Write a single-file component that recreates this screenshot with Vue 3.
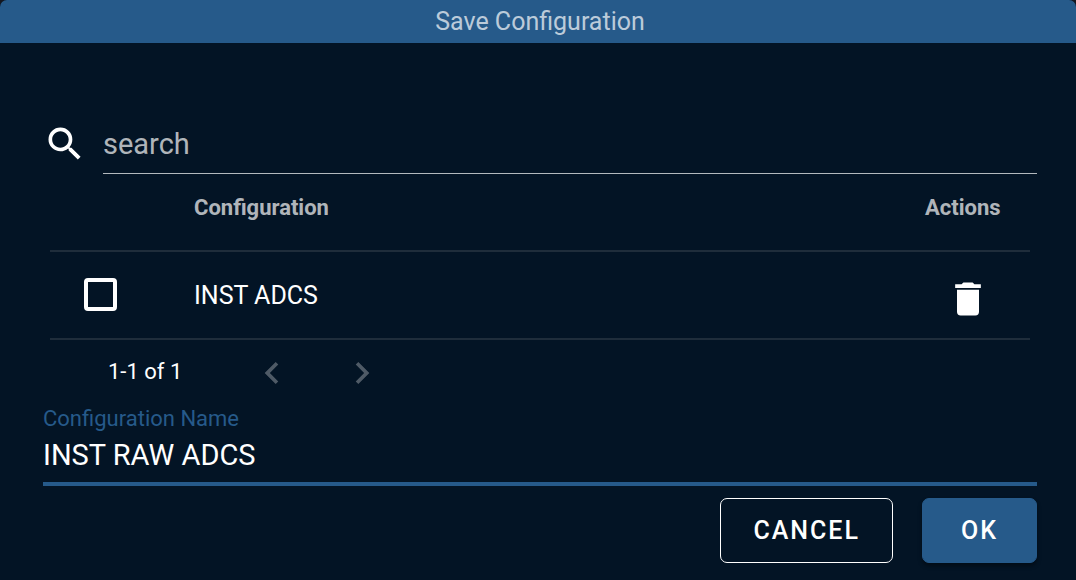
<script setup>
import { computed, ref } from 'vue'

const search = ref('')
const name = ref('INST RAW ADCS')
const selected = ref([])
const configs = ref(['INST ADCS'])
const shown = computed(() =>
  configs.value.filter((c) => c.toLowerCase().includes(search.value.toLowerCase()))
)

function remove(config) {
  configs.value = configs.value.filter((c) => c !== config)
}
</script>

<template>
  <form class="dialog" @submit.prevent>
    <header class="bar">
      <h1>Save Configuration</h1>
    </header>
    <main class="body">
      <div class="search">
        <svg class="icon" viewBox="0 0 24 24" aria-hidden="true">
          <path
            d="M9.5,3A6.5,6.5 0 0,1 16,9.5C16,11.11 15.41,12.59 14.44,13.73L14.71,14H15.5L20.5,19L19,20.5L14,15.5V14.71L13.73,14.44C12.59,15.41 11.11,16 9.5,16A6.5,6.5 0 0,1 3,9.5A6.5,6.5 0 0,1 9.5,3M9.5,5C7,5 5,7 5,9.5C5,12 7,14 9.5,14C12,14 14,12 14,9.5C14,7 12,5 9.5,5Z"
          />
        </svg>
        <input v-model="search" type="text" placeholder="search" aria-label="search" />
      </div>

      <div class="list">
        <table>
          <thead>
            <tr>
              <th class="pick"></th>
              <th>Configuration</th>
              <th class="actions">Actions</th>
            </tr>
          </thead>
          <tbody>
            <tr v-for="config in shown" :key="config">
              <td class="pick">
                <input v-model="selected" type="checkbox" :value="config" :aria-label="config" />
              </td>
              <td>{{ config }}</td>
              <td class="actions">
                <button type="button" class="plain" aria-label="Delete" @click="remove(config)">
                  <svg class="icon" viewBox="0 0 24 24" aria-hidden="true">
                    <path
                      d="M19,4H15.5L14.5,3H9.5L8.5,4H5V6H19V4M6,19A2,2 0 0,0 8,21H16A2,2 0 0,0 18,19V7H6V19Z"
                    />
                  </svg>
                </button>
              </td>
            </tr>
          </tbody>
        </table>
        <nav class="pager" aria-label="Pages">
          <span>1-1 of 1</span>
          <button type="button" class="plain" disabled aria-label="Previous page">
            <svg class="icon" viewBox="0 0 24 24" aria-hidden="true">
              <path d="M15.41,16.58L10.83,12L15.41,7.41L14,6L8,12L14,18L15.41,16.58Z" />
            </svg>
          </button>
          <button type="button" class="plain" disabled aria-label="Next page">
            <svg class="icon" viewBox="0 0 24 24" aria-hidden="true">
              <path d="M8.59,16.58L13.17,12L8.59,7.41L10,6L16,12L10,18L8.59,16.58Z" />
            </svg>
          </button>
        </nav>
      </div>

      <div class="field">
        <label for="config-name">Configuration Name</label>
        <input id="config-name" v-model="name" type="text" />
      </div>

      <footer class="buttons">
        <button type="button" class="btn outlined">CANCEL</button>
        <button type="submit" class="btn primary">OK</button>
      </footer>
    </main>
  </form>
</template>

<style>
body {
  background: #15171f;
}
</style>

<style scoped>
.dialog {
  box-sizing: border-box;
  min-height: 100vh;
  overflow: hidden;
  border-radius: 7px 7px 0 0;
  background: #031425;
  color: #fff;
  font-family: Roboto, sans-serif;
}
.dialog * {
  box-sizing: border-box;
}
.bar {
  height: 43px;
  padding-left: 4px;
  background: #265a8a;
  text-align: center;
}
h1 {
  margin: 0;
  color: rgba(255, 255, 255, 0.7);
  font-size: 25px;
  font-weight: 400;
  line-height: 43px;
}
.body {
  padding: 72px 39px 17px 43px;
}
.icon {
  display: block;
  width: 44px;
  height: 44px;
  flex: none;
  fill: currentColor;
}
.search {
  display: flex;
  align-items: center;
  gap: 16px;
}
.search .icon {
  margin-bottom: 2px;
}
input[type='text'] {
  display: block;
  width: 100%;
  min-width: 0;
  padding: 0;
  border: 0;
  border-radius: 0;
  outline: 0;
  background: transparent;
  color: #fff;
  font-family: inherit;
  font-size: 29px;
}
.search input[type='text'] {
  height: 59px;
  border-bottom: 1px solid rgba(255, 255, 255, 0.7);
}
.search input::placeholder {
  color: rgba(255, 255, 255, 0.7);
  opacity: 1;
}
.list {
  padding: 0 7px;
}
table {
  width: 100%;
  border-collapse: separate;
  border-spacing: 0;
  text-align: left;
}
th,
td {
  padding: 0 29px;
  border-bottom: 2px solid #1f2d3b;
}
th {
  height: 78px;
  padding-bottom: 10px;
  color: rgba(255, 255, 255, 0.7);
  font-size: 22px;
  font-weight: 700;
}
td {
  height: 88px;
  font-size: 25px;
}
.pick {
  width: 115px;
  padding: 0 0 2px 34px;
}
.actions {
  width: 134px;
}
td.actions {
  padding: 8px 0 0 50px;
}
input[type='checkbox'] {
  display: block;
  width: 33px;
  height: 33px;
  margin: 0;
  border: 4px solid #fff;
  border-radius: 4px;
  appearance: none;
}
input[type='checkbox']:checked {
  background: #fff;
}
.plain {
  display: block;
  padding: 0;
  border: 0;
  background: none;
  color: #fff;
}
.plain:disabled {
  color: rgba(255, 255, 255, 0.3);
}
.pager {
  display: flex;
  align-items: center;
  gap: 46px;
  height: 66px;
  padding-left: 58px;
  font-size: 22px;
}
.pager span {
  padding-bottom: 4px;
  margin-right: 22px;
}
.field label {
  display: block;
  color: #265a8a;
  font-size: 22px;
  line-height: 26px;
}
.field input[type='text'] {
  height: 54px;
  padding-bottom: 4px;
  border-bottom: 4px solid #265a8a;
}
.buttons {
  display: flex;
  justify-content: flex-end;
  gap: 29px;
  padding-top: 12px;
}
.btn {
  height: 65px;
  padding: 0 32px;
  border: 1px solid #fff;
  border-radius: 7px;
  background: transparent;
  color: #fff;
  font-family: inherit;
  font-size: 25px;
  font-weight: 500;
  letter-spacing: 2px;
}
.primary {
  padding: 0 38px;
  border-color: #265a8a;
  background: #265a8a;
  box-shadow: 0 3px 4px rgba(0, 0, 0, 0.4);
}
</style>
